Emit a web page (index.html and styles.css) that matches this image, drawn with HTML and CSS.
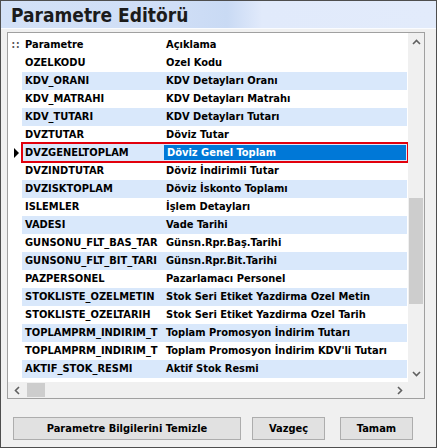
FILE: index.html
```html
<!DOCTYPE html>
<html lang="tr">
<head>
<meta charset="utf-8">
<title>Parametre Editörü</title>
<link rel="stylesheet" href="styles.css">
</head>
<body>
<div class="window">
  <div class="titlebar"><span class="title">Parametre Editörü</span></div>
  <div class="content">
    <div class="grid">
      <div class="grid-main">
        <div class="row head">
          <div class="ind grip">::</div>
          <div class="c1">Parametre</div>
          <div class="c2">Açıklama</div>
        </div>
        <div class="row"><div class="ind"></div><div class="cells"><div class="c1">OZELKODU</div><div class="c2">Ozel Kodu</div></div></div>
        <div class="row alt"><div class="ind"></div><div class="cells"><div class="c1">KDV_ORANI</div><div class="c2">KDV Detayları Oranı</div></div></div>
        <div class="row"><div class="ind"></div><div class="cells"><div class="c1">KDV_MATRAHI</div><div class="c2">KDV Detayları Matrahı</div></div></div>
        <div class="row alt"><div class="ind"></div><div class="cells"><div class="c1">KDV_TUTARI</div><div class="c2">KDV Detayları Tutarı</div></div></div>
        <div class="row"><div class="ind"></div><div class="cells"><div class="c1">DVZTUTAR</div><div class="c2">Döviz Tutar</div></div></div>
        <div class="row alt sel"><div class="ind"><span class="arrow"></span></div><div class="cells"><div class="c1">DVZGENELTOPLAM</div><div class="c2">Döviz Genel Toplam</div></div></div>
        <div class="row"><div class="ind"></div><div class="cells"><div class="c1">DVZINDTUTAR</div><div class="c2">Döviz İndirimli Tutar</div></div></div>
        <div class="row alt"><div class="ind"></div><div class="cells"><div class="c1">DVZISKTOPLAM</div><div class="c2">Döviz İskonto Toplamı</div></div></div>
        <div class="row"><div class="ind"></div><div class="cells"><div class="c1">ISLEMLER</div><div class="c2">İşlem Detayları</div></div></div>
        <div class="row alt"><div class="ind"></div><div class="cells"><div class="c1">VADESI</div><div class="c2">Vade Tarihi</div></div></div>
        <div class="row"><div class="ind"></div><div class="cells"><div class="c1">GUNSONU_FLT_BAS_TAR</div><div class="c2">Günsn.Rpr.Baş.Tarihi</div></div></div>
        <div class="row alt"><div class="ind"></div><div class="cells"><div class="c1">GUNSONU_FLT_BIT_TARI</div><div class="c2">Günsn.Rpr.Bit.Tarihi</div></div></div>
        <div class="row"><div class="ind"></div><div class="cells"><div class="c1">PAZPERSONEL</div><div class="c2">Pazarlamacı Personel</div></div></div>
        <div class="row alt"><div class="ind"></div><div class="cells"><div class="c1">STOKLISTE_OZELMETIN</div><div class="c2">Stok Seri Etiket Yazdirma Ozel Metin</div></div></div>
        <div class="row"><div class="ind"></div><div class="cells"><div class="c1">STOKLISTE_OZELTARIH</div><div class="c2">Stok Seri Etiket Yazdirma Ozel Tarih</div></div></div>
        <div class="row alt"><div class="ind"></div><div class="cells"><div class="c1">TOPLAMPRM_INDIRIM_T</div><div class="c2">Toplam Promosyon İndirim Tutarı</div></div></div>
        <div class="row"><div class="ind"></div><div class="cells"><div class="c1">TOPLAMPRM_INDIRIM_T</div><div class="c2">Toplam Promosyon İndirim KDV'li Tutarı</div></div></div>
        <div class="row alt"><div class="ind"></div><div class="cells"><div class="c1">AKTIF_STOK_RESMI</div><div class="c2">Aktif Stok Resmi</div></div></div>
      </div>
      <div class="vscroll">
        <div class="sbtn"><svg width="9" height="6" viewBox="0 0 9 6"><path d="M1 5 L4.5 1.5 L8 5" fill="none" stroke="#606060" stroke-width="1.6"/></svg></div>
        <div class="vtrack"><div class="vthumb"></div></div>
        <div class="sbtn"><svg width="9" height="6" viewBox="0 0 9 6"><path d="M1 1 L4.5 4.5 L8 1" fill="none" stroke="#606060" stroke-width="1.6"/></svg></div>
      </div>
      <div class="hscroll">
        <div class="hbtn"><svg width="6" height="9" viewBox="0 0 6 9"><path d="M5 1 L1.5 4.5 L5 8" fill="none" stroke="#606060" stroke-width="1.6"/></svg></div>
        <div class="htrack"><div class="hthumb"></div></div>
        <div class="hbtn"><svg width="6" height="9" viewBox="0 0 6 9"><path d="M1 1 L4.5 4.5 L1 8" fill="none" stroke="#606060" stroke-width="1.6"/></svg></div>
      </div>
      <div class="corner"></div>
    </div>
  </div>
  <div class="footer">
    <button class="btn wide">Parametre Bilgilerini Temizle</button>
    <button class="btn">Vazgeç</button>
    <button class="btn">Tamam</button>
  </div>
</div>
</body>
</html>
```
FILE: styles.css
```css
* { box-sizing: border-box; }
html, body { margin: 0; padding: 0; background: #f0f0f0; }
body {
  font-family: "DejaVu Sans Condensed", "DejaVu Sans", sans-serif;
  font-stretch: condensed;
  font-weight: bold;
  font-size: 11px;
  color: #000;
}
.window {
  width: 437px;
  height: 448px;
  border: 1px solid #4e4e4e;
  background: #f0f0f0;
  display: flex;
  flex-direction: column;
}
.titlebar {
  height: 28px;
  background: linear-gradient(to right, #d3e1f7 0%, #cfdef6 40%, #c9daf4 52%, #e1eafb 60%, #e2ebfb 100%);
  display: flex;
  align-items: center;
  padding-left: 10px;
  border-bottom: 1px solid #fafcff;
}
.title {
  font-size: 19px;
  color: #1b1b1b;
  padding-top: 1px;
}
.content {
  padding: 3px 11px 0 6px;
}
.grid {
  width: 418px;
  height: 367px;
  border: 1px solid #a0a0a0;
  background: #fff;
  display: grid;
  grid-template-columns: 1fr 16px;
  grid-template-rows: 1fr 16px;
  overflow: hidden;
}
.grid-main {
  overflow: hidden;
  background: #fff;
}
.row {
  display: flex;
  height: 18px;
}
.row.head {
  height: 21px;
  padding-top: 2px;
}
.ind {
  width: 14px;
  flex: none;
  display: flex;
  align-items: center;
  justify-content: center;
}
.grip {
  color: #555;
  font-size: 10px;
  letter-spacing: 1px;
  padding-left: 2px;
}
.cells {
  display: flex;
  width: 385px;
  flex: none;
}
.c1 {
  width: 141px;
  flex: none;
  padding-left: 3px;
  white-space: nowrap;
  overflow: hidden;
  text-overflow: clip;
  line-height: 18px;
}
.c2 {
  flex: 1;
  padding-left: 3px;
  white-space: nowrap;
  overflow: hidden;
  line-height: 18px;
}
.head .c1, .head .c2 { line-height: 19px; }
.head .c2 { width: 244px; flex: none; }
.row.alt .cells { background: #d9e8fb; }
.row.sel .cells {
  outline: 2px solid #e2000c;
  outline-offset: -1px;
  height: 19px;
  margin-top: -1px;
  width: 386px;
}
.row.sel .c2 {
  background: #0078d7;
  color: #fff;
  margin: 2px 2px 2px 1px;
  line-height: 15px;
}
.row.sel .c1 { line-height: 19px; }
.arrow {
  width: 0;
  height: 0;
  border-top: 5px solid transparent;
  border-bottom: 5px solid transparent;
  border-left: 5px solid #000;
  margin-left: 2px;
}
.vscroll {
  background: #f0f0f0;
  display: flex;
  flex-direction: column;
}
.sbtn {
  height: 17px;
  display: flex;
  align-items: center;
  justify-content: center;
  flex: none;
}
.vtrack {
  flex: 1;
  display: flex;
  flex-direction: column;
  padding: 148px 1px 0 1px;
}
.vthumb {
  height: 106px;
  background: #cdcdcd;
}
.hscroll {
  background: #f0f0f0;
  display: flex;
}
.hbtn {
  width: 17px;
  display: flex;
  align-items: center;
  justify-content: center;
  flex: none;
}
.htrack {
  flex: 1;
  display: flex;
  padding: 1px 0 1px 2px;
}
.hthumb {
  width: 18px;
  background: #cdcdcd;
}
.corner { background: #f0f0f0; }
.footer {
  flex: 1;
  display: flex;
  align-items: flex-start;
  padding: 18px 0 0 12px;
}
.btn {
  font-family: inherit;
  font-stretch: condensed;
  font-weight: bold;
  font-size: 11px;
  color: #000;
  height: 23px;
  width: 73px;
  background: #e1e1e1;
  border: 1px solid #adadad;
  border-radius: 0;
  padding: 0;
  margin-right: 15px;
}
.btn.wide { width: 228px; margin-right: 11px; }
```
